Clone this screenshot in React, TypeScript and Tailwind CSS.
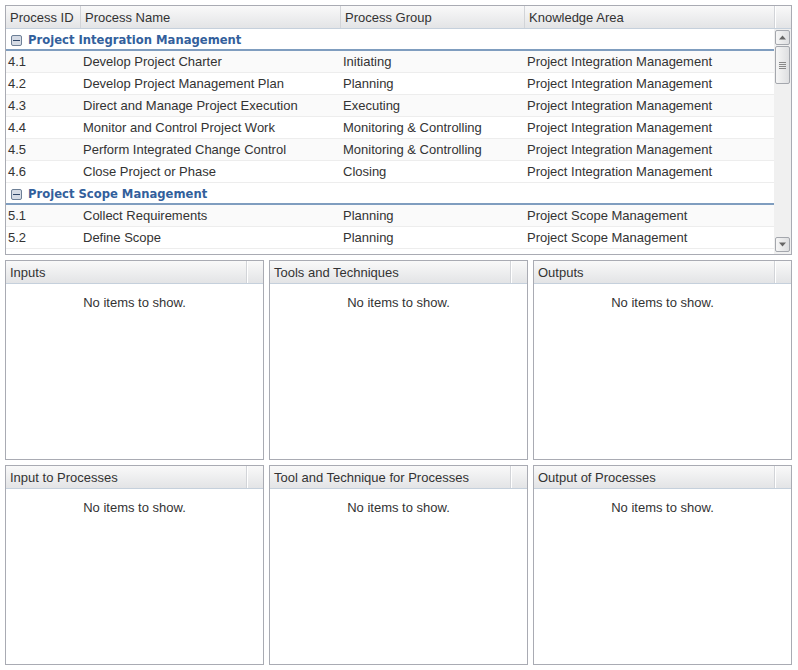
import React from "react";

const headerBg = "bg-gradient-to-b from-[#f9f9f9] to-[#e3e4e6]";

const columns = [
  { label: "Process ID", width: "w-[75px]" },
  { label: "Process Name", width: "w-[260px]" },
  { label: "Process Group", width: "w-[184px]" },
  { label: "Knowledge Area", width: "w-[250px]" },
];

const groups = [
  {
    name: "Project Integration Management",
    rows: [
      ["4.1", "Develop Project Charter", "Initiating"],
      ["4.2", "Develop Project Management Plan", "Planning"],
      ["4.3", "Direct and Manage Project Execution", "Executing"],
      ["4.4", "Monitor and Control Project Work", "Monitoring & Controlling"],
      ["4.5", "Perform Integrated Change Control", "Monitoring & Controlling"],
      ["4.6", "Close Project or Phase", "Closing"],
    ],
  },
  {
    name: "Project Scope Management",
    rows: [
      ["5.1", "Collect Requirements", "Planning"],
      ["5.2", "Define Scope", "Planning"],
    ],
  },
];

const ScrollArrow = ({ up }: { up?: boolean }) => (
  <div className="h-[15px] w-[15px] rounded-[2px] border border-[#a4a7ad] bg-gradient-to-r from-[#f6f6f6] to-[#dedfe1] flex items-center justify-center">
    <svg width="7" height="5" viewBox="0 0 7 5">
      <path d={up ? "M3.5 0.5 L7 4.5 H0 Z" : "M0 0.5 H7 L3.5 4.5 Z"} fill="#666" />
    </svg>
  </div>
);

const Scrollbar = () => (
  <div className="w-[17px] shrink-0 bg-[#f0f0f0] flex flex-col items-center pt-[1px] pb-[2px]">
    <ScrollArrow up />
    <div className="mt-px h-[38px] w-[15px] rounded-[2px] border border-[#a4a7ad] bg-gradient-to-r from-[#f6f6f6] to-[#dedfe1] flex flex-col items-center justify-center gap-px">
      <div className="h-px w-[7px] bg-[#888]" />
      <div className="h-px w-[7px] bg-[#888]" />
      <div className="h-px w-[7px] bg-[#888]" />
      <div className="h-px w-[7px] bg-[#888]" />
    </div>
    <div className="flex-1" />
    <ScrollArrow />
  </div>
);

const Panel = ({ title }: { title: string }) => (
  <div className="flex-1 h-[200px] border border-[#a9abb3] bg-white flex flex-col">
    <div className={`h-[23px] flex border-b border-[#c5d0dc] ${headerBg}`}>
      <div className="flex-1 pl-1 pt-px leading-[22px] border-r border-[#d2d4d8] truncate">{title}</div>
      <div className="w-[16px] border-l border-white" />
    </div>
    <div className="pt-[11px] text-center leading-[16px]">No items to show.</div>
  </div>
);

export default function App() {
  return (
    <div className="w-[798px] h-[670px] bg-white p-[5px] pr-[6px] flex flex-col gap-[5px] text-[13px] text-[#333] font-['Liberation_Sans',Arial,sans-serif]">
      <div className="h-[250px] border border-[#a9abb3] flex flex-col overflow-hidden">
        <div className={`h-[23px] shrink-0 flex border-b border-[#c5d0dc] ${headerBg}`}>
          {columns.map((c) => (
            <div key={c.label} className={`${c.width} shrink-0 pl-1 pt-px leading-[22px] border-r border-[#d2d4d8]`}>
              {c.label}
            </div>
          ))}
          <div className="flex-1 border-l border-white" />
        </div>
        <div className="flex flex-1 min-h-0">
          <div className="flex-1 min-w-0 overflow-hidden">
            {groups.map((g) => (
              <div key={g.name}>
                <div className="h-[22px] border-b-2 border-[#7f9dbf] flex items-center pl-[5px] gap-[6px] pt-[3px] font-['DejaVu_Sans',Verdana,sans-serif] font-bold text-[11.6px] text-[#335f9c]">
                  <div className="w-[11px] h-[11px] rounded-[2px] border border-[#6d7f96] bg-[#d5dbe5] flex items-center justify-center">
                    <div className="w-[7px] h-px bg-[#2f4668]" />
                  </div>
                  {g.name}
                </div>
                {g.rows.map((r, i) => (
                  <div
                    key={r[0]}
                    className={`h-[22px] flex items-center border-b border-[#ededed] ${i % 2 === 1 ? "bg-white" : "bg-[#fafafa]"}`}
                  >
                    <div className="w-[75px] pl-[2px] shrink-0">{r[0]}</div>
                    <div className="w-[260px] pl-[2px] shrink-0">{r[1]}</div>
                    <div className="w-[184px] pl-[2px] shrink-0">{r[2]}</div>
                    <div className="pl-[2px] whitespace-nowrap">{g.name}</div>
                  </div>
                ))}
              </div>
            ))}
          </div>
          <Scrollbar />
        </div>
      </div>
      <div className="flex gap-[5px]">
        <Panel title="Inputs" />
        <Panel title="Tools and Techniques" />
        <Panel title="Outputs" />
      </div>
      <div className="flex gap-[5px]">
        <Panel title="Input to Processes" />
        <Panel title="Tool and Technique for Processes" />
        <Panel title="Output of Processes" />
      </div>
    </div>
  );
}
